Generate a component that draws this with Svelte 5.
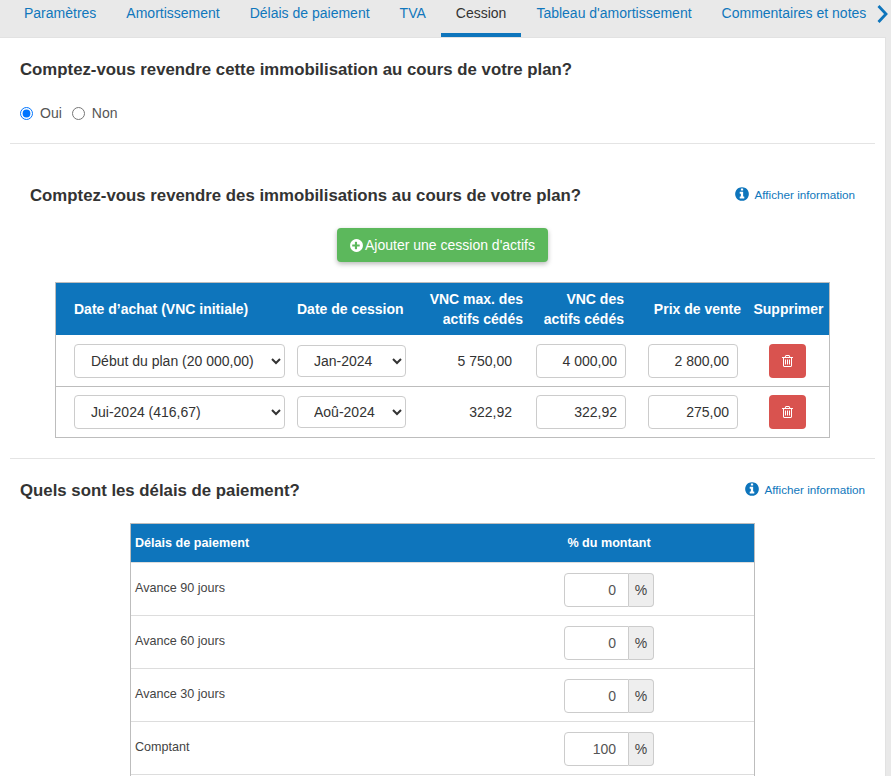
<script>
  const tabs = ['Paramètres', 'Amortissement', 'Délais de paiement', 'TVA', 'Cession', "Tableau d'amortissement", 'Commentaires et notes'];
  const info = 'M1024 1376v-160q0-14-9-23t-23-9h-96v-512q0-14-9-23t-23-9h-320q-14 0-23 9t-9 23v160q0 14 9 23t23 9h96v320h-96q-14 0-23 9t-9 23v160q0 14 9 23t23 9h448q14 0 23-9t9-23zm-128-896v-160q0-14-9-23t-23-9h-192q-14 0-23 9t-9 23v160q0 14 9 23t23 9h192q14 0 23-9t9-23zm640 416q0 209-103 385.5t-279.5 279.5-385.5 103-385.5-103-279.5-279.5-103-385.5 103-385.5 279.5-279.5 385.5-103 385.5 103 279.5 279.5 103 385.5z';
  const plus = 'M1152 960v-128q0-26-19-45t-45-19h-256v-256q0-26-19-45t-45-19h-128q-26 0-45 19t-19 45v256h-256q-26 0-45 19t-19 45v128q0 26 19 45t45 19h256v256q0 26 19 45t45 19h128q26 0 45-19t19-45v-256h256q26 0 45-19t19-45zm384-64q0 209-103 385.5t-279.5 279.5-385.5 103-385.5-103-279.5-279.5-103-385.5 103-385.5 279.5-279.5 385.5-103 385.5 103 279.5 279.5 103 385.5z';
  const trash = 'M512 736v576q0 14-9 23t-23 9h-64q-14 0-23-9t-9-23v-576q0-14 9-23t23-9h64q14 0 23 9t9 23zm256 0v576q0 14-9 23t-23 9h-64q-14 0-23-9t-9-23v-576q0-14 9-23t23-9h64q14 0 23 9t9 23zm256 0v576q0 14-9 23t-23 9h-64q-14 0-23-9t-9-23v-576q0-14 9-23t23-9h64q14 0 23 9t9 23zm128 724v-948h-896v948q0 22 7 40.5t14.5 27 10.5 8.5h832q3 0 10.5-8.5t14.5-27 7-40.5zm-672-1076h448l-48-117q-7-9-17-11h-317q-10 2-17 11zm928 32v64q0 14-9 23t-23 9h-96v948q0 83-47 143.5t-113 60.5h-832q-66 0-113-58.5t-47-141.5v-952h-96q-14 0-23-9t-9-23v-64q0-14 9-23t23-9h309l70-167q15-37 54-63t79-26h320q40 0 79 26t54 63l70 167h309q14 0 23 9t9 23z';
  const cessions = [
    { date: 'Début du plan (20 000,00)', sale: 'Jan-2024', max: '5 750,00', vnc: '4 000,00', price: '2 800,00' },
    { date: 'Jui-2024 (416,67)', sale: 'Aoû-2024', max: '322,92', vnc: '322,92', price: '275,00' }
  ];
  const delays = [
    { label: 'Avance 90 jours', value: '0' },
    { label: 'Avance 60 jours', value: '0' },
    { label: 'Avance 30 jours', value: '0' },
    { label: 'Comptant', value: '100' }
  ];
</script>

<div class="page">
  <nav class="tabs">
    {#each tabs as tab}
      <span class="tab" class:active={tab === 'Cession'}>{tab}</span>
    {/each}
    <svg class="chevron" viewBox="0 0 11 18" width="11" height="18"><path d="M1.5 1 L9 9 L1.5 17" fill="none" stroke="#0e75bc" stroke-width="2.8"/></svg>
  </nav>

  <main class="panel">
    <section class="first">
      <h2>Comptez-vous revendre cette immobilisation au cours de votre plan?</h2>
      <div class="radios">
        <label><input type="radio" name="sell" checked /> Oui</label>
        <label><input type="radio" name="sell" /> Non</label>
      </div>
    </section>
    <hr />

    <section class="assets">
      <div class="head">
        <h2>Comptez-vous revendre des immobilisations au cours de votre plan?</h2>
        <a class="info" href="#top"><svg viewBox="0 0 1536 1792" width="14" height="16"><path d={info} /></svg>Afficher information</a>
      </div>
      <div class="action">
        <button class="add"><svg viewBox="0 0 1536 1792" width="13" height="15"><path d={plus} /></svg>Ajouter une cession d'actifs</button>
      </div>
      <table class="cessions">
        <colgroup>
          <col class="c1" /><col class="c2" /><col class="c3" /><col class="c4" /><col class="c5" /><col class="c6" />
        </colgroup>
        <thead>
          <tr>
            <th class="left first-col">Date d’achat (VNC initiale)</th>
            <th class="left">Date de cession</th>
            <th>VNC max. des<br />actifs cédés</th>
            <th class="vnc">VNC des<br />actifs cédés</th>
            <th>Prix de vente</th>
            <th class="center">Supprimer</th>
          </tr>
        </thead>
        <tbody>
          {#each cessions as c}
            <tr>
              <td class="first-col"><select class="wide"><option>{c.date}</option></select></td>
              <td><select class="narrow"><option>{c.sale}</option></select></td>
              <td class="num">{c.max}</td>
              <td><input class="amount" value={c.vnc} /></td>
              <td><input class="amount" value={c.price} /></td>
              <td class="center"><button class="del" aria-label="Supprimer"><svg viewBox="0 0 1408 1792" width="11" height="14"><path d={trash} /></svg></button></td>
            </tr>
          {/each}
        </tbody>
      </table>
    </section>
    <hr />

    <section class="delays">
      <div class="head">
        <h2>Quels sont les délais de paiement?</h2>
        <a class="info" href="#top"><svg viewBox="0 0 1536 1792" width="14" height="16"><path d={info} /></svg>Afficher information</a>
      </div>
      <table class="terms">
        <colgroup><col class="t1" /><col class="t2" /></colgroup>
        <thead>
          <tr><th>Délais de paiement</th><th class="center">% du montant</th></tr>
        </thead>
        <tbody>
          {#each delays as d}
            <tr>
              <td>{d.label}</td>
              <td class="inputcell">
                <div class="group"><input value={d.value} /><span>%</span></div>
              </td>
            </tr>
          {/each}
          <tr><td></td><td></td></tr>
        </tbody>
      </table>
    </section>
  </main>
</div>

<style>
  :global(body) {
    margin: 0;
    overflow: hidden;
    background: #e9e9e9;
  }
  .page {
    height: 776px;
    overflow: hidden;
    background: #e9e9e9;
    font-family: "Liberation Sans", Arial, sans-serif;
    font-size: 14px;
    color: #333;
  }
  .tabs {
    display: flex;
    height: 37px;
    padding-left: 9px;
    position: relative;
  }
  .tab {
    padding: 5px 15px 0;
    line-height: 16px;
    color: #1077bc;
    white-space: nowrap;
    box-sizing: border-box;
    height: 37px;
  }
  .tab.active {
    color: #333;
    border-bottom: 4px solid #0e75bc;
  }
  .chevron {
    position: absolute;
    left: 877px;
    top: 5px;
  }
  .panel {
    width: 886px;
    background: #fff;
    box-sizing: border-box;
    height: 739px;
    overflow: hidden;
    border-top: 1px solid #e2e2e2;
    border-right: 1px solid #e2e2e2;
  }
  h2 {
    margin: 0;
    font-size: 16.8px;
    line-height: 20px;
    font-weight: 700;
    color: #333;
  }
  .first {
    padding: 22px 20px 0;
    box-sizing: border-box;
    height: 105px;
  }
  .radios {
    display: flex;
    gap: 10px;
    margin-top: 23px;
    color: #555;
    line-height: 20px;
  }
  .radios label {
    display: flex;
    align-items: center;
  }
  .radios input {
    margin: 0 7px 0 0;
    width: 13px;
    height: 13px;
  }
  hr {
    margin: 0 10px;
    border: 0;
    border-top: 1px solid #e4e4e4;
  }
  .assets {
    padding: 42px 55px 0;
    height: 314px;
    box-sizing: border-box;
  }
  .head {
    display: flex;
    justify-content: space-between;
    align-items: flex-start;
  }
  .assets .head {
    margin-left: -25px;
    margin-right: -25px;
  }
  .info {
    display: flex;
    align-items: center;
    gap: 6px;
    font-size: 11.7px;
    color: #1077bc;
    text-decoration: none;
  }
  .info svg {
    fill: #0e75bc;
  }
  .action {
    display: flex;
    justify-content: center;
    margin: 22px 0 20px;
  }
  .add {
    display: flex;
    align-items: center;
    gap: 2px;
    width: 211px;
    height: 34px;
    justify-content: center;
    padding: 0;
    border: 0;
    border-radius: 4px;
    background: #5cb85c;
    color: #fff;
    font: 14px "Liberation Sans", Arial, sans-serif;
    box-shadow: 0 2px 5px rgba(0, 0, 0, 0.28);
  }
  .add svg {
    fill: #fff;
  }
  table {
    border-collapse: separate;
    border-spacing: 0;
    table-layout: fixed;
  }
  .cessions {
    width: 775px;
    border: 1px solid #bdbdbd;
  }
  .c1 { width: 235px; }
  .c2 { width: 121px; }
  .c3 { width: 118px; }
  .c4 { width: 112px; }
  .c5 { width: 106px; }
  .c6 { width: 81px; }
  .cessions th {
    background: #0e75bc;
    color: #fff;
    font-size: 14px;
    line-height: 20px;
    height: 52px;
    padding: 0 7px 0 6px;
    text-align: right;
    box-sizing: border-box;
  }
  .cessions th.left {
    text-align: left;
  }
  .cessions th.vnc {
    padding-right: 18px;
  }
  .cessions th.center {
    text-align: center;
    padding: 0;
  }
  .cessions td.center {
    text-align: center;
    padding: 0 2px 0 0;
  }
  .cessions th.first-col,
  .cessions td.first-col {
    padding-left: 18px;
  }
  .cessions td {
    padding: 0 6px;
    height: 51px;
    box-sizing: border-box;
    border-top: 1px solid #bdbdbd;
  }
  .cessions tbody tr:first-child td {
    border-top: 0;
    height: 51px;
  }
  .cessions td.num {
    text-align: right;
    padding-right: 18px;
  }
  select,
  .amount,
  .group input {
    font: 14px "Liberation Sans", Arial, sans-serif;
    color: #333;
    background: #fff;
    border: 1px solid #ccc;
    border-radius: 4px;
    box-sizing: border-box;
    display: block;
  }
  .wide {
    width: 211px;
    height: 34px;
    padding-left: 12px;
  }
  .narrow {
    width: 109px;
    height: 32px;
    padding-left: 12px;
  }
  .amount {
    width: 90px;
    height: 34px;
    text-align: right;
    padding: 0 8px;
  }
  .del {
    width: 37px;
    height: 34px;
    border: 0;
    border-radius: 4px;
    background: #d9534f;
    padding: 0;
    vertical-align: middle;
    display: inline-flex;
    align-items: center;
    justify-content: center;
  }
  .del svg {
    fill: #fff;
  }
  .delays {
    padding: 22px 20px 0;
  }
  .terms {
    width: 625px;
    margin: 22px 0 0 110px;
    border-left: 1px solid #bdbdbd;
    border-right: 1px solid #bdbdbd;
    border-top: 1px solid #bdbdbd;
  }
  .t1 { width: 403px; }
  .t2 { width: 220px; }
  .terms th {
    background: #0e75bc;
    color: #fff;
    font-size: 12.6px;
    height: 38px;
    padding: 0 4px;
    text-align: left;
  }
  .terms th.center {
    text-align: center;
    padding: 0 70px 0 0;
  }
  .terms td {
    height: 53px;
    box-sizing: border-box;
    border-top: 1px solid #ddd;
    font-size: 12.6px;
    padding: 18px 4px 0;
    vertical-align: top;
    color: #444;
  }
  .terms td.inputcell {
    padding: 10px 0 0 30px;
  }
  .group {
    display: flex;
    width: 90px;
    height: 34px;
  }
  .group input {
    width: 65px;
    height: 34px;
    text-align: right;
    padding: 0 12px 0 0;
    border-radius: 4px 0 0 4px;
    color: #555;
  }
  .group span {
    flex: 1;
    display: flex;
    align-items: center;
    justify-content: center;
    border: 1px solid #ccc;
    border-left: 0;
    border-radius: 0 4px 4px 0;
    background: #eee;
    font-size: 14px;
    color: #444;
  }
</style>
